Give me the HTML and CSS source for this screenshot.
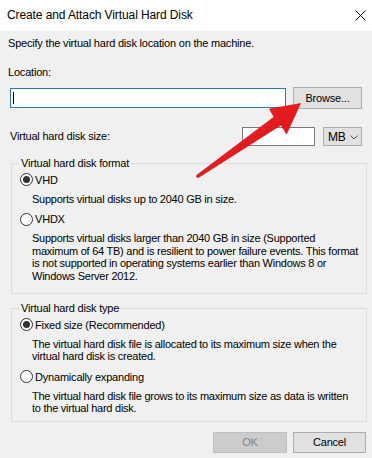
FILE: index.html
```html
<!DOCTYPE html>
<html>
<head>
<meta charset="utf-8">
<link rel="stylesheet" href="styles.css">
</head>
<body>
<div class="window">
  <div class="titlebar">
    <span class="title">Create and Attach Virtual Hard Disk</span>
    <svg class="close" width="11" height="11" viewBox="0 0 11 11"><path d="M0.5 0.5 L10.5 10.5 M10.5 0.5 L0.5 10.5" stroke="#000" stroke-width="1" fill="none"/></svg>
  </div>
  <div class="content">
    <p class="intro">Specify the virtual hard disk location on the machine.</p>
    <p class="label">Location:</p>
    <div class="loc-row">
      <div class="textbox focused"><span class="caret"></span></div>
      <button class="btn browse">Browse...</button>
    </div>
    <div class="size-row">
      <span class="size-label">Virtual hard disk size:</span>
      <div class="textbox size"></div>
      <div class="combo"><span>MB</span><svg width="8" height="5" viewBox="0 0 8 5"><path d="M0.5 0.5 L4 4 L7.5 0.5" stroke="#555" fill="none" stroke-width="1"/></svg></div>
    </div>
    <fieldset class="group g1">
      <legend>Virtual hard disk format</legend>
      <div class="radio checked"><span class="circle"></span>VHD</div>
      <p class="desc">Supports virtual disks up to 2040 GB in size.</p>
      <div class="radio"><span class="circle"></span>VHDX</div>
      <p class="desc">Supports virtual disks larger than 2040 GB in size (Supported<br>maximum of 64 TB) and is resilient to power failure events. This format<br>is not supported in operating systems earlier than Windows 8 or<br>Windows Server 2012.</p>
    </fieldset>
    <fieldset class="group g2">
      <legend>Virtual hard disk type</legend>
      <div class="radio checked"><span class="circle"></span>Fixed size (Recommended)</div>
      <p class="desc">The virtual hard disk file is allocated to its maximum size when the<br>virtual hard disk is created.</p>
      <div class="radio"><span class="circle"></span>Dynamically expanding</div>
      <p class="desc">The virtual hard disk file grows to its maximum size as data is written<br>to the virtual hard disk.</p>
    </fieldset>
    <div class="buttons">
      <button class="btn ok" disabled>OK</button>
      <button class="btn cancel">Cancel</button>
    </div>
  </div>
  <svg class="arrow" width="372" height="458" viewBox="0 0 372 458">
    <defs>
      <linearGradient id="ag" x1="0" y1="0" x2="1" y2="1">
        <stop offset="0" stop-color="#f2282a"/>
        <stop offset="1" stop-color="#d70f12"/>
      </linearGradient>
    </defs>
    <path d="M300.5 103.5 L269.5 109 L274 117 L197 175 Q195.5 177.5 198.5 177.5 L281 125 L286.5 134 Z" fill="url(#ag)" stroke="#c40d10" stroke-width="0.6" stroke-linejoin="round"/>
  </svg>
</div>
</body>
</html>
```
FILE: styles.css
```css
* { box-sizing: border-box; }
html, body { margin: 0; padding: 0; }
body {
  width: 372px;
  height: 458px;
  overflow: hidden;
  background: #f0f0f0;
  font-family: "Liberation Sans", Arial, sans-serif;
  font-size: 11px;
  letter-spacing: -0.2px;
  color: #000;
}
.window { position: relative; width: 372px; height: 458px; background: #f0f0f0; }
.titlebar {
  height: 31px;
  background: #fff;
  display: flex;
  align-items: center;
  justify-content: space-between;
  padding: 0 6px 0 7px;
}
.title { font-size: 12px; line-height: 15px; letter-spacing: -0.1px; }
.close { display: block; }
.content { padding: 0 5px 0 8px; }
p { margin: 0; }
.intro { line-height: 15px; margin-top: 4.5px; }
.label { line-height: 15px; margin-top: 14.5px; }
.loc-row { display: flex; align-items: center; margin-top: 7px; height: 22px; padding-left: 2px; }
.textbox { background: #fff; border: 1px solid #7a7a7a; }
.textbox.focused {
  width: 276px; height: 20px;
  border-color: #2f79b5;
  display: flex; align-items: center; padding-left: 2px;
}
.caret { display: block; width: 1px; height: 12px; background: #000; }
.btn {
  font-family: inherit; font-size: 11px; letter-spacing: -0.2px; color: #000;
  background: #e1e1e1; border: 1px solid #adadad;
  padding: 0; margin: 0; line-height: 15px;
}
.browse { width: 69px; height: 22px; margin-left: 7px; }
.size-row { display: flex; align-items: center; margin-top: 18px; height: 19px; padding-left: 2px; padding-right: 5px; }
.size-label { line-height: 15px; flex: 1; }
.textbox.size { width: 73px; height: 19px; }
.combo {
  width: 39px; height: 19px; margin-left: 8px;
  background: #e1e1e1; border: 1px solid #adadad;
  display: flex; align-items: center; justify-content: space-between;
  padding: 0 3px 0 4px;
  font-size: 12px;
}
.combo svg { display: block; margin-top: 1px; }
.group {
  margin: 0 0 0 3px;
  width: 356px;
  border: 1px solid #dcdcdc;
  padding: 0 4px 4px 7px;
  min-width: 0;
}
.g1 { margin-top: 9.5px; padding-bottom: 4.5px; }
.g2 { margin-top: 7px; padding-bottom: 0.5px; }
legend { padding: 0 2px; line-height: 15px; margin-left: 0; }
.radio {
  display: flex; align-items: center; height: 16px; line-height: 16px;
  white-space: nowrap;
}
.group > legend + .radio { margin-top: 1px; }
.circle {
  width: 13px; height: 13px; border-radius: 50%;
  border: 1px solid #333; background: #fff;
  margin-left: 1px; margin-right: 2px;
  display: flex; align-items: center; justify-content: center;
}
.radio.checked .circle::after {
  content: ""; width: 7px; height: 7px; border-radius: 50%; background: #333;
}
.desc { margin: 5px 0 6px 13px; line-height: 12.5px; white-space: nowrap; letter-spacing: -0.25px; }
.buttons { display: flex; justify-content: flex-end; gap: 6px; margin-top: 10px; padding-right: 1px; }
.ok { width: 74px; height: 21px; background: #cccccc; border-color: #bfbfbf; color: #838383; }
.cancel { width: 73px; height: 21px; }
.arrow { position: absolute; left: 0; top: 0; pointer-events: none; }
```
